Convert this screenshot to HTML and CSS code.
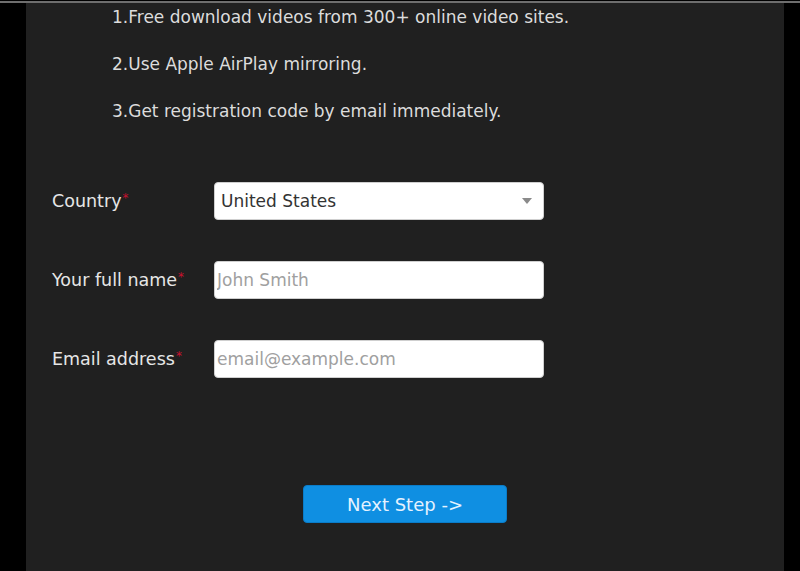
FILE: index.html
```html
<!DOCTYPE html>
<html lang="en">

<head>
    <meta charset="UTF-8">
    <meta name="viewport" content="width=device-width, initial-scale=1.0">
    <title>Registration</title>
    <link rel="stylesheet" href="styles.css">
</head>

<body>
    <div id="page">
        <div class="panel">
            <ul class="benefits">
                <li>1.Free download videos from 300+ online video sites.</li>
                <li>2.Use Apple AirPlay mirroring.</li>
                <li>3.Get registration code by email immediately.</li>
            </ul>

            <form class="reg_form">
                <div class="row">
                    <label class="label">Country<span class="req">*</span></label>
                    <div class="select">
                        <span>United States</span>
                        <svg class="arrow" width="10" height="6" viewBox="0 0 10 6"><path d="M0 0 L10 0 L5 6 Z" fill="#8a8a8a"/></svg>
                    </div>
                </div>
                <div class="row">
                    <label class="label" for="name">Your full name<span class="req">*</span></label>
                    <input type="text" id="name" class="field" placeholder="John Smith">
                </div>
                <div class="row">
                    <label class="label" for="email">Email address<span class="req">*</span></label>
                    <input type="text" id="email" class="field" placeholder="email@example.com">
                </div>

                <div class="btns">
                    <button type="button" class="next_btn">Next Step -&gt;</button>
                </div>
            </form>
        </div>
    </div>
</body>

</html>
```

FILE: styles.css
```css
body {
    margin: 0;
    background: #000;
    font-family: "DejaVu Sans", sans-serif;
}

#page {
    height: 571px;
    overflow: hidden;
    padding-top: 1px;
    box-sizing: border-box;
    background: linear-gradient(#000 1px, #6e6e6e 1px, #6e6e6e 3px, #000 3px);
}

.panel {
    margin: 0 16px 0 26px;
    height: 100%;
    background: #202020;
    border-top: 2px solid #6e6e6e;
    box-sizing: border-box;
    padding-top: 2px;
}

.benefits {
    list-style: none;
    margin: 0;
    padding: 0 0 0 86px;
    display: flex;
    flex-direction: column;
    gap: 23px;
}

.benefits li {
    color: #dcdcdc;
    font-size: 17px;
    line-height: 24px;
}

.reg_form {
    margin-top: 59px;
    padding-left: 26px;
    display: flex;
    flex-direction: column;
    gap: 41px;
}

.row {
    display: flex;
    align-items: center;
    height: 38px;
}

.label {
    width: 162px;
    color: #e6e6e6;
    font-size: 17.5px;
}

.req {
    color: #c8102e;
    font-size: 12px;
    vertical-align: top;
    margin-left: 1px;
}

.select,
.field {
    width: 330px;
    height: 38px;
    box-sizing: border-box;
    background: #fff;
    border: 1px solid #cfcfcf;
    border-radius: 4px;
    font-family: inherit;
    font-size: 17px;
}

.select {
    display: flex;
    align-items: center;
    justify-content: space-between;
    padding: 0 11px 0 6px;
    color: #333;
}

.field {
    padding: 0 2px;
    color: #333;
    outline: none;
}

.field::placeholder {
    color: #a0a0a0;
}

.btns {
    text-align: center;
    margin-top: 66px;
    padding-right: 26px;
}

.next_btn {
    width: 204px;
    height: 38px;
    background: #0f8fe2;
    border: 1px solid #0a7cc8;
    border-radius: 4px;
    color: #e4f2ff;
    font-family: inherit;
    font-size: 18px;
}
```
